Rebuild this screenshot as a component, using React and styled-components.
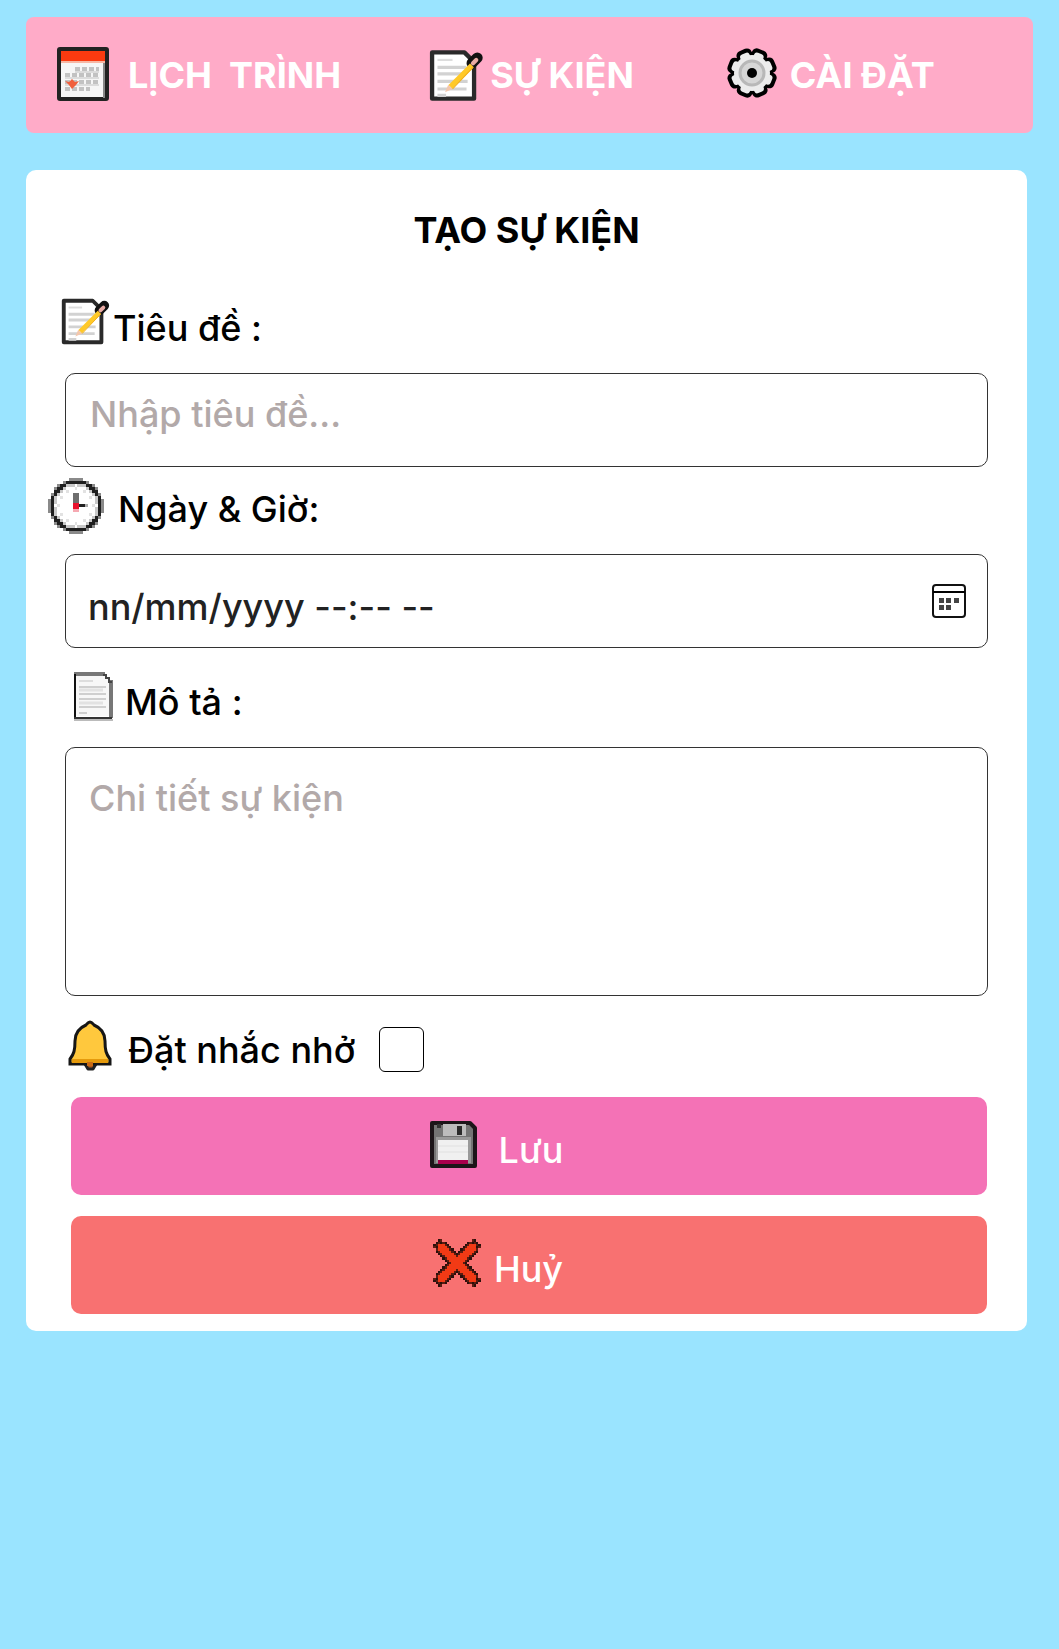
import React from "react";
import styled, { createGlobalStyle } from "styled-components";

const GlobalStyle = createGlobalStyle`
  *, *::before, *::after { box-sizing: border-box; }
  body {
    margin: 0;
    background: #9ae4ff;
    color: #000;
    font-family: Inter, "Liberation Sans", sans-serif;
    font-size: 36px;
    line-height: 44px;
  }
  button, input, textarea { font: inherit; }
`;

const Page = styled.div`
  padding: 17px 26px;
`;

const Nav = styled.nav`
  display: flex;
  flex-wrap: wrap;
  align-items: center;
  gap: 0 90px;
  min-height: 116px;
  padding: 0 29px;
  border-radius: 8px;
  background: #ffabc8;
`;

const NavLink = styled.a`
  display: flex;
  align-items: center;
  gap: ${(p) => p.$gap}px;
  color: #fff;
  font-weight: 700;
  text-decoration: none;
  white-space: nowrap;
`;

const Card = styled.main`
  margin: 37px 6px 0 0;
  padding: 38px 22px 17px;
  border-radius: 10px;
  background: #fff;
`;

const Title = styled.h1`
  margin: 0 0 42px;
  font-size: 36px;
  font-weight: 700;
  text-align: center;
`;

const Form = styled.form`
  display: flex;
  flex-direction: column;
`;

const LabelRow = styled.div`
  display: flex;
  align-items: flex-end;
  gap: 24px;
  height: 56px;
  padding-left: ${(p) => p.$inset}px;
`;

const Label = styled.label`
  display: flex;
  align-items: flex-end;
  gap: ${(p) => p.$gap}px;
  font-weight: 500;
  white-space: nowrap;
`;

const Icon = styled.svg`
  flex: none;
  width: 56px;
  height: 56px;
  overflow: visible;
`;

const Field = styled.div`
  display: flex;
  align-items: center;
  height: ${(p) => p.$height}px;
  margin: 23px 17px ${(p) => p.$after}px;
  border: 1px solid #333;
  border-radius: 10px;
  overflow: hidden;
`;

const TextInput = styled.input`
  flex: 1;
  min-width: 0;
  height: 100%;
  padding: ${(p) => p.$padding};
  border: 0;
  background: transparent;
  color: #222;
  font-weight: 500;
  outline: none;
  &::placeholder {
    color: ${(p) => p.$hint};
    opacity: 1;
  }
`;

const TextArea = styled.textarea`
  flex: 1;
  min-width: 0;
  height: 100%;
  padding: 28px 23px;
  border: 0;
  background: transparent;
  color: #222;
  font-weight: 500;
  resize: none;
  outline: none;
  &::placeholder {
    color: #b2a9a9;
    opacity: 1;
  }
`;

const PickerButton = styled.button`
  flex: none;
  display: flex;
  margin-right: 21px;
  padding: 0;
  border: 0;
  background: none;
  cursor: pointer;
`;

const Checkbox = styled.input`
  appearance: none;
  width: 45px;
  height: 45px;
  margin: 0;
  border: 1px solid #000;
  border-radius: 6px;
  background: #fff;
  &:checked {
    background: #f472b6;
  }
`;

const Actions = styled.div`
  display: flex;
  flex-direction: column;
  gap: 21px;
  margin: 25px 18px 0 23px;
`;

const ActionButton = styled.button`
  display: flex;
  align-items: flex-end;
  justify-content: center;
  gap: ${(p) => p.$gap}px;
  height: 98px;
  padding: 0 66px 23px 0;
  border: 0;
  border-radius: 10px;
  background: ${(p) => p.$color};
  color: #fff;
  font-weight: 500;
  cursor: pointer;
`;

function CalendarIcon() {
  return (
    <Icon viewBox="0 0 56 56" aria-hidden="true">
      <rect x="4" y="2" width="48" height="50" rx="1" fill="#f6f6f6" stroke="#222" strokeWidth="4" />
      <path d="M6 4h44v10H6z" fill="#fb3a10" />
      <path d="M6 14h44v2H6z" fill="#f7b7a4" />
      <path d="M49 16v35" stroke="#888" strokeWidth="2" />
      <path d="M20 22h24M10 28h34M10 35h34M10 42h25" stroke="#c2c2c2" strokeWidth="4" strokeDasharray="5 2" />
      <path d="M20 25h24M10 31h34M10 38h34" stroke="#dcdcdc" strokeWidth="2" />
      <path d="M10 34l4 1 3-3 3 3 4-1-3 4-4 4-3-4z" fill="#f0603e" />
    </Icon>
  );
}

function NoteIcon({ viewBox }) {
  return (
    <Icon viewBox={viewBox} aria-hidden="true">
      <path d="M6 6h30l9 9v34H6z" fill="#fff" stroke="#2a2a2a" strokeWidth="4" strokeLinejoin="round" />
      <path d="M11 13h14" stroke="#ddd" strokeWidth="2" />
      <path d="M11 20h27M11 26h24M11 33h28M11 40h27M11 46h8" stroke="#d2d2d2" strokeWidth="3" />
      <path d="M43 16l5-5" stroke="#111" strokeWidth="10" strokeLinecap="round" />
      <path d="M23 38L43 18" stroke="#ffc928" strokeWidth="5" />
      <path d="M25 40L44 20" stroke="#f0ad1b" strokeWidth="1" />
      <path d="M44 16l3-3" stroke="#e9aaa4" strokeWidth="4" strokeLinecap="round" />
      <path d="M21 36l4 4-7 3z" fill="#f3c7ad" />
    </Icon>
  );
}

function GearIcon() {
  const teeth = [0, 45, 90, 135, 180, 225, 270, 315];
  return (
    <Icon viewBox="0 0 56 56" aria-hidden="true">
      <g fill="#000">
        <circle cx="28" cy="26" r="21" />
        {teeth.map((a) => (
          <rect key={a} x="20" y="1" width="16" height="12" rx="5" transform={`rotate(${a + 22} 28 26)`} />
        ))}
      </g>
      <g fill="#ececec">
        <circle cx="28" cy="26" r="18" />
        {teeth.map((a) => (
          <rect key={a} x="23" y="5" width="10" height="9" rx="3" transform={`rotate(${a + 22} 28 26)`} />
        ))}
      </g>
      <circle cx="28" cy="26" r="12" fill="#d6d6d6" stroke="#b8b8b8" strokeWidth="3" />
      <circle cx="28" cy="26" r="5" fill="#000" />
    </Icon>
  );
}

function pixelGrid(size, colorAt) {
  const cells = [];
  const middle = (size - 1) / 2;
  for (let row = 0; row < size; row += 1) {
    for (let col = 0; col < size; col += 1) {
      const fill = colorAt(col - middle, row - middle);
      if (fill) {
        cells.push({ key: `${col}-${row}`, x: col, y: row, fill });
      }
    }
  }
  return cells;
}

const clockCells = pixelGrid(19, (x, y) => {
  const r = Math.hypot(x, y);
  if (r > 9.3) return null;
  if (r > 8.9) return "#8a8a8a";
  if (r > 7.7) return "#1f1f1f";
  if (r > 7) return "#c8c8c8";
  const tick = (Math.abs(x) === 6 && y === 0) || (Math.abs(y) === 6 && x === 0);
  const diagonal = (Math.abs(x) === 3 && Math.abs(y) === 5) || (Math.abs(x) === 5 && Math.abs(y) === 3);
  return tick || diagonal ? "#e2e2e2" : "#fff";
});

const crossCells = pixelGrid(21, (x, y) => {
  const a = Math.abs(Math.abs(x) - Math.abs(y)) / Math.SQRT2;
  const along = (Math.abs(x) + Math.abs(y)) / 2;
  const d = along > 7.5 ? Math.hypot(a, (along - 7.5) * Math.SQRT2) : a;
  if (d < 1.5) return "#f23a15";
  if (d < 2.9) return (x + y) % 2 === 0 ? "#2a100c" : "#5a1c10";
  return null;
});

function ClockIcon() {
  return (
    <Icon viewBox="0 -1 19 19" shapeRendering="crispEdges" aria-hidden="true">
      {clockCells.map((c) => (
        <rect key={c.key} x={c.x} y={c.y} width="1" height="1" fill={c.fill} />
      ))}
      <path d="M8.5 5h2v4h-2z" fill="#6e6e6e" />
      <path d="M10.5 9h2v1h-2z" fill="#222" />
      <path d="M12.5 9h1v1h-1z" fill="#aaa" />
      <path d="M8.5 8.5h2v2h-2z" fill="#e8112d" />
      <path d="M8.5 10.5h2v1h-2z" fill="#f6a9b2" />
    </Icon>
  );
}

function CancelIcon() {
  return (
    <Icon viewBox="-2 -2 25 25" shapeRendering="crispEdges" aria-hidden="true">
      {crossCells.map((c) => (
        <rect key={c.key} x={c.x} y={c.y} width="1" height="1" fill={c.fill} />
      ))}
    </Icon>
  );
}

function DocumentIcon() {
  return (
    <Icon viewBox="0 0 56 56" aria-hidden="true">
      <path d="M10 6h28l8 7v35H10z" fill="#f7f7f7" />
      <path d="M9 6h31" stroke="#777" strokeWidth="4" />
      <path d="M46 12v38" stroke="#777" strokeWidth="4" />
      <path d="M10 6v44" stroke="#111" strokeWidth="2" />
      <path d="M9 50h38" stroke="#333" strokeWidth="2" />
      <path d="M9 52h39" stroke="#bbb" strokeWidth="2" />
      <path d="M38 7h3v3h3v4h3" fill="none" stroke="#444" strokeWidth="2" />
      <path d="M14 13h14" stroke="#ddd" strokeWidth="2" />
      <path d="M14 19h27M14 26h27M14 31h27M14 39h27M14 45h8" stroke="#cfcfcf" strokeWidth="2" />
      <path d="M14 22h24M14 35h24" stroke="#e2e2e2" strokeWidth="3" />
    </Icon>
  );
}

function BellIcon() {
  return (
    <Icon viewBox="0 0 56 56" aria-hidden="true">
      <path d="M20 48h11l-3 5h-5z" fill="#b35a1c" stroke="#222" strokeWidth="3" strokeLinejoin="round" />
      <path
        d="M25 6c2 0 3 2 4 3 7 3 11 9 11 16 0 9 1 13 5 18v5H5v-5c4-5 5-9 5-18 0-7 4-13 11-16 1-1 2-3 4-3z"
        fill="#ffc83d"
        stroke="#161616"
        strokeWidth="3"
      />
      <path d="M7 43h36v4H7z" fill="#e59a0c" />
      <path d="M22 46h6v4h-6z" fill="#c96b16" />
    </Icon>
  );
}

function SaveIcon() {
  return (
    <Icon viewBox="3 0 56 56" aria-hidden="true">
      <path d="M6 7h38l5 5v38H6z" fill="#747474" stroke="#1c1519" strokeWidth="4" strokeLinejoin="round" />
      <path d="M17 8h23v12H17z" fill="#bcbcbc" />
      <path d="M31 10h5v9h-5z" fill="#2b2b2b" />
      <path d="M11 8h4v4h-4z" fill="#333" />
      <path d="M10 21h35v26H10z" fill="#999" />
      <path d="M12 24h30v20H12z" fill="#f0f0f0" />
      <path d="M12 30h30M12 36h30" stroke="#e0e0e0" strokeWidth="1" />
      <path d="M12 44h30v4H12z" fill="#a8004d" />
    </Icon>
  );
}

function PickerIcon() {
  return (
    <svg width="34" height="34" viewBox="0 0 34 34" aria-hidden="true">
      <rect x="1" y="1" width="32" height="32" rx="3" fill="#fff" stroke="#111" strokeWidth="2" />
      <path d="M1 8h32" stroke="#000" strokeWidth="2" />
      <path d="M7 14h5v5H7zM14 14h5v5h-5zM22 14h5v5h-5zM7 21h5v5H7zM14 21h5v5h-5z" fill="#444" />
    </svg>
  );
}

export default function App() {
  return (
    <>
      <GlobalStyle />
      <Page>
        <Nav>
          <NavLink href="#lich-trinh" $gap={17}>
            <CalendarIcon />
            {"LỊCH \u00a0TRÌNH"}
          </NavLink>
          <NavLink href="#su-kien" $gap={3}>
            <NoteIcon viewBox="5 1 52 52" />
            SỰ KIỆN
          </NavLink>
          <NavLink href="#cai-dat" $gap={10}>
            <GearIcon />
            CÀI ĐẶT
          </NavLink>
        </Nav>
        <Card>
          <Title>TẠO SỰ KIỆN</Title>
          <Form onSubmit={(e) => e.preventDefault()}>
            <LabelRow $inset={9}>
              <Label htmlFor="title" $gap={0}>
                <NoteIcon viewBox="-1 -1 58 58" />
                Tiêu đề :
              </Label>
            </LabelRow>
            <Field $height={94} $after={8}>
              <TextInput id="title" type="text" placeholder="Nhập tiêu đề..." $padding="0 24px 12px" $hint="#b2a9a9" />
            </Field>
            <LabelRow $inset={0}>
              <Label htmlFor="date" $gap={14}>
                <ClockIcon />
                Ngày &amp; Giờ:
              </Label>
            </LabelRow>
            <Field $height={94} $after={20}>
              <TextInput id="date" type="text" placeholder="nn/mm/yyyy --:-- --" $padding="12px 22px 0" $hint="#222" />
              <PickerButton type="button" aria-label="Chọn ngày">
                <PickerIcon />
              </PickerButton>
            </Field>
            <LabelRow $inset={17}>
              <Label htmlFor="details" $gap={4}>
                <DocumentIcon />
                Mô tả :
              </Label>
            </LabelRow>
            <Field $height={249} $after={20}>
              <TextArea id="details" placeholder="Chi tiết sự kiện" />
            </Field>
            <LabelRow $inset={17}>
              <Label htmlFor="reminder" $gap={7}>
                <BellIcon />
                Đặt nhắc nhở
              </Label>
              <Checkbox id="reminder" type="checkbox" />
            </LabelRow>
            <Actions>
              <ActionButton type="submit" $color="#f472b6" $gap={14}>
                <SaveIcon />
                Lưu
              </ActionButton>
              <ActionButton type="button" $color="#f87171" $gap={9}>
                <CancelIcon />
                Huỷ
              </ActionButton>
            </Actions>
          </Form>
        </Card>
      </Page>
    </>
  );
}
